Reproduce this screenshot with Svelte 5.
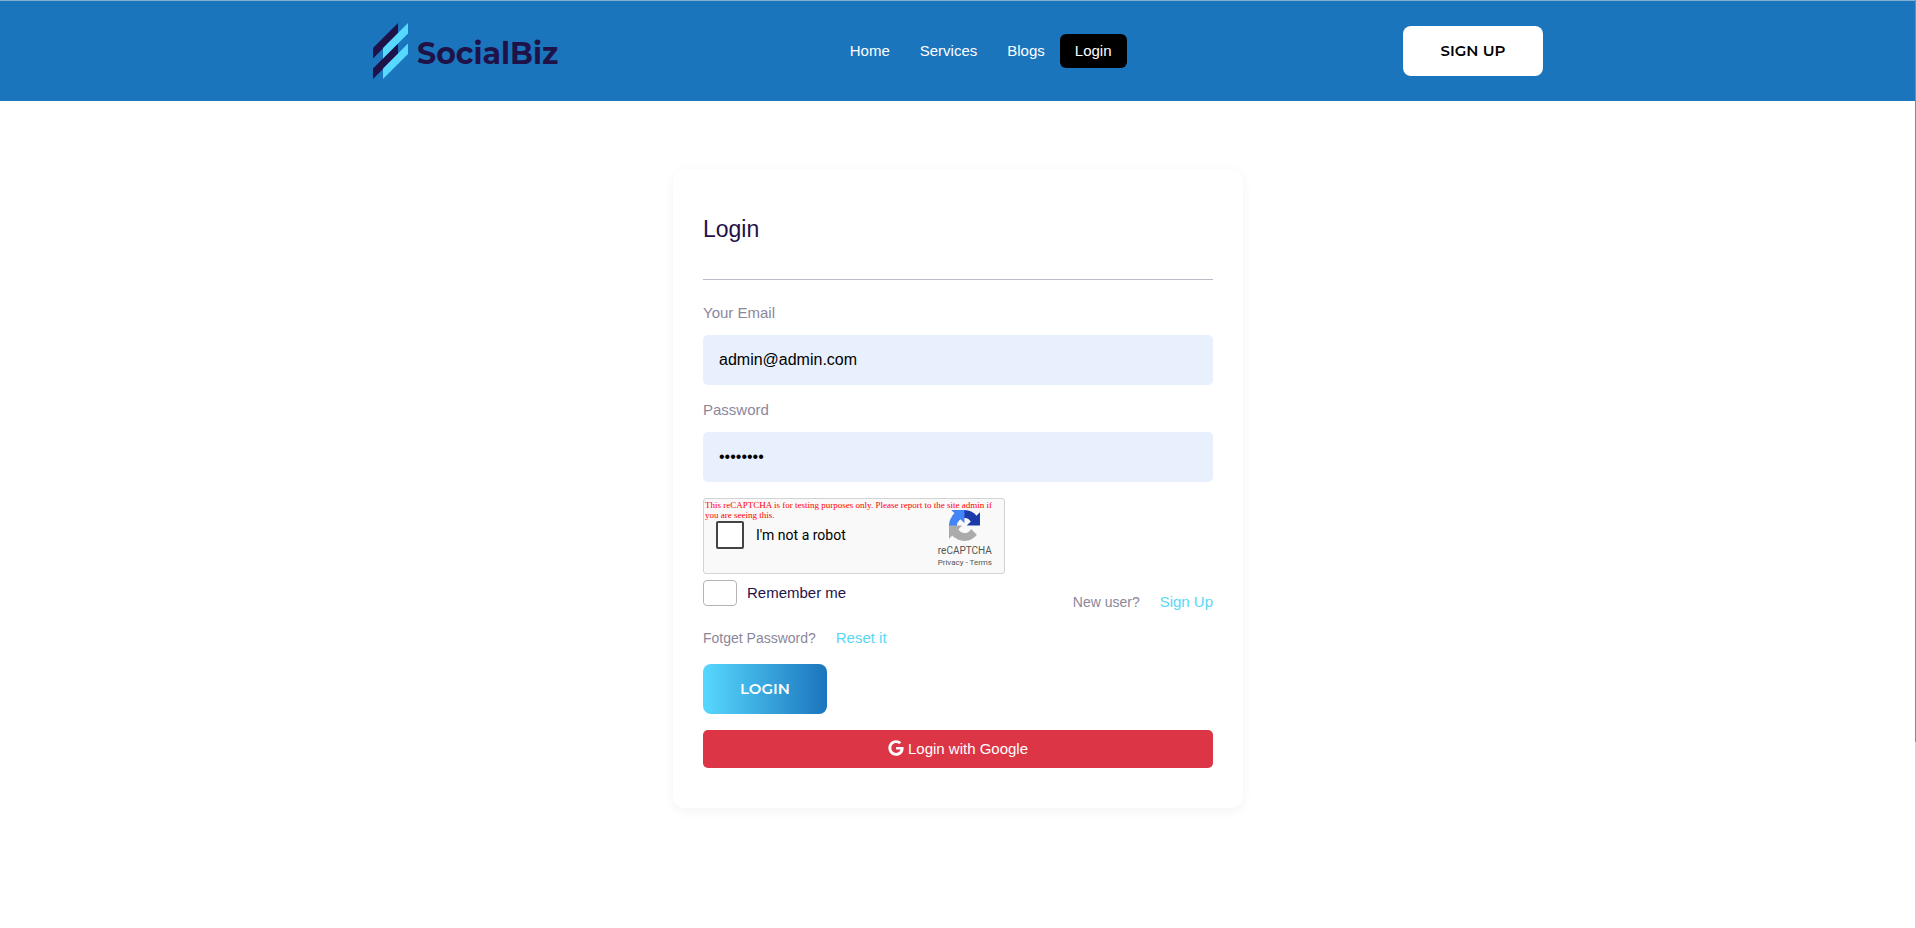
<script lang="ts">
	interface NavItem {
		label: string;
		href: string;
	}

	const navItems: NavItem[] = [
		{ label: 'Home', href: '#home' },
		{ label: 'Services', href: '#services' },
		{ label: 'Blogs', href: '#blogs' },
		{ label: 'Login', href: '#login' },
	];

	let current = $state('Login');
	let email = $state('admin@admin.com');
	let password = $state('password');
	let notRobot = $state(false);
	let remember = $state(false);

	function handleSubmit(e: SubmitEvent) {
		e.preventDefault();
	}
</script>

<div class="page">
	<header class="header">
		<div class="container">
			<a class="logo" href="#home">
				<svg class="logo-mark" viewBox="0 0 36 56" aria-hidden="true">
					<path fill="#1f1249" d="M0 25 25 0v10.500L0 35.500z" />
					<path fill="#1f1249" d="M0 45.500 25 20.500v10.500L0 56z" />
					<path fill="#57d8ff" d="M10 25 35 0v10.500L10 35.500z" />
					<path fill="#57d8ff" d="M10 45.500 35 20.500v10.500L10 56z" />
				</svg>
				<span class="logo-text">SocialBiz</span>
			</a>
			<nav class="nav">
				{#each navItems as item}
					<a
						class="nav-link"
						class:active={current === item.label}
						href={item.href}
						onclick={() => (current = item.label)}>{item.label}</a
					>
				{/each}
			</nav>
			<button class="btn signup" type="button">SIGN UP</button>
		</div>
	</header>

	<main class="main">
		<form class="card" onsubmit={handleSubmit}>
			<h1 class="title">Login</h1>

			<label class="label" for="email">Your Email</label>
			<input class="field" id="email" type="email" bind:value={email} />

			<label class="label" for="password">Password</label>
			<input class="field" id="password" type="password" bind:value={password} />

			<div class="captcha">
				<p class="captcha-warning">
					This reCAPTCHA is for testing purposes only. Please report to the site admin if you are seeing this.
				</p>
				<label class="captcha-check">
					<input type="checkbox" bind:checked={notRobot} />
					<span>I'm not a robot</span>
				</label>
				<div class="captcha-brand">
					<svg viewBox="0 0 64 64" aria-hidden="true">
						<path fill="#1c3aa9" d="M64 31.955l-.033-1.37V4.687l-7.16 7.16C50.948 4.674 42.033.093 32.05.093c-10.4 0-19.622 4.96-25.458 12.64l11.736 11.86a15.55 15.55 0 0 1 4.754-5.334c2.05-1.6 4.952-2.906 8.968-2.906.485 0 .86.057 1.135.163 4.976.393 9.288 3.14 11.828 7.124l-8.307 8.307L64 31.955" />
						<path fill="#4285f4" d="M31.862.094l-1.37.033H4.594l7.16 7.16C4.58 13.147 0 22.06 0 32.046c0 10.4 4.96 19.622 12.64 25.458L24.5 45.768a15.55 15.55 0 0 1-5.334-4.754c-1.6-2.05-2.906-4.952-2.906-8.968 0-.485.057-.86.163-1.135.393-4.976 3.14-9.288 7.124-11.828l8.307 8.307L31.86.095" />
						<path fill="#ababab" d="M.001 32.045l.033 1.37v25.898l7.16-7.16c5.86 7.173 14.774 11.754 24.76 11.754 10.4 0 19.622-4.96 25.458-12.64l-11.736-11.86a15.55 15.55 0 0 1-4.754 5.334c-2.05 1.6-4.952 2.906-8.968 2.906-.485 0-.86-.057-1.135-.163-4.976-.393-9.288-3.14-11.828-7.124l8.307-8.307c-10.522.04-22.4.066-27.295-.005" />
					</svg>
					<span class="captcha-name">reCAPTCHA</span>
					<span class="captcha-links"><a href="#privacy">Privacy</a> - <a href="#terms">Terms</a></span>
				</div>
			</div>

			<div class="options">
				<label class="remember">
					<input type="checkbox" bind:checked={remember} />
					<span>Remember me</span>
				</label>
				<p class="hint new-user">New user? <a href="#signup">Sign Up</a></p>
			</div>
			<p class="hint">Fotget Password? <a href="#reset">Reset it</a></p>

			<button class="btn submit" type="submit">LOGIN</button>
			<button class="google" type="button">
				<svg viewBox="0 0 488 512" aria-hidden="true">
					<path fill="currentColor" d="M488 261.8C488 403.3 391.1 504 248 504 110.8 504 0 393.2 0 256S110.8 8 248 8c66.8 0 123 24.5 166.3 64.9l-67.5 64.9C258.5 52.6 94.3 116.6 94.3 256c0 86.5 69.1 156.6 153.7 156.6 98.2 0 135-70.4 140.8-106.9H248v-85.3h236.1c2.3 12.7 3.9 24.9 3.9 41.4z" />
				</svg>
				<span>Login with Google</span>
			</button>
		</form>
	</main>
	<div class="edge"></div>
</div>

<style>
	.page {
		min-height: 100vh;
		background: #fff;
		font-family: 'Liberation Sans', Arial, sans-serif;
		font-size: 15px;
		line-height: 24px;
		color: #1f1249;
	}

	a {
		text-decoration: none;
	}

	.header {
		padding: 22px 15px;
		border-top: 1px solid #82b0d3;
		background: #1b75bc;
	}

	.container {
		display: flex;
		align-items: center;
		justify-content: space-between;
		max-width: 1170px;
		margin: 0 auto;
	}

	.logo {
		display: flex;
		align-items: center;
		gap: 8px;
		color: #1f1249;
	}

	.logo-mark {
		width: 36px;
		height: 56px;
	}

	.logo-text {
		padding-top: 6px;
		font-family: Montserrat, Inter, sans-serif;
		font-size: 30px;
		font-weight: 700;
	}

	.nav {
		display: flex;
	}

	.nav-link {
		padding: 5px 15px;
		border-radius: 6px;
		color: #fff;
	}

	.active {
		background: #000;
	}

	.btn {
		height: 50px;
		padding: 0 0 2px;
		border: 0;
		border-radius: 8px;
		font-family: Montserrat, Inter, sans-serif;
		font-size: 15px;
		font-weight: 600;
		cursor: pointer;
	}

	.signup {
		width: 140px;
		background: #fff;
		color: #000;
	}

	.main {
		padding: 68px 15px;
	}

	.card {
		box-sizing: border-box;
		max-width: 570px;
		margin: 0 auto;
		padding: 30px 30px 40px;
		border-radius: 12px;
		background: #fff;
		box-shadow: 0 3px 12px rgba(0, 0, 0, 0.05);
	}

	.title {
		margin: 0 0 21px;
		padding: 14px 0 34px;
		border-bottom: 1px solid #bcbac4;
		font-size: 23px;
		font-weight: 400;
		line-height: 32px;
	}

	.label {
		display: block;
		margin-bottom: 10px;
		color: #8b879b;
	}

	.field {
		box-sizing: border-box;
		display: block;
		width: 100%;
		height: 50px;
		margin-bottom: 13px;
		padding: 0 16px;
		border: 0;
		border-radius: 5px;
		outline: 0;
		background: #e8f0fe;
		color: #000;
		font-family: inherit;
		font-size: 16px;
	}

	.captcha {
		position: relative;
		box-sizing: border-box;
		display: flex;
		align-items: center;
		justify-content: space-between;
		width: 302px;
		height: 76px;
		margin-top: 16px;
		padding: 0 12px 2px;
		border: 1px solid #d3d3d3;
		border-radius: 3px;
		background: #f9f9f9;
		color: #000;
		font-family: Roboto, sans-serif;
	}

	/* the test-key notice lies over the widget */
	.captcha-warning {
		position: absolute;
		top: 1px;
		left: 1px;
		right: 2px;
		margin: 0;
		color: #f00;
		font-family: 'Liberation Serif', serif;
		font-size: 9px;
		line-height: 10px;
	}

	.captcha-check {
		display: flex;
		align-items: center;
		gap: 12px;
		font-size: 14px;
	}

	.captcha-check input {
		appearance: none;
		box-sizing: border-box;
		width: 28px;
		height: 28px;
		margin: 0;
		border: 2px solid #444;
		border-radius: 2px;
		background: #fff;
	}

	.captcha-brand {
		display: flex;
		flex-direction: column;
		align-items: center;
		padding-top: 8px;
		color: #555;
		font-size: 10px;
		line-height: 12px;
	}

	.captcha-brand svg {
		width: 31px;
		height: 31px;
		margin-bottom: 4px;
	}

	.captcha-links {
		font-size: 8px;
	}

	.captcha-links a {
		color: #555;
	}

	.options {
		display: flex;
		justify-content: space-between;
		margin-top: 6px;
	}

	.remember {
		display: flex;
		align-items: center;
		gap: 10px;
		height: 26px;
	}

	.remember input {
		appearance: none;
		box-sizing: border-box;
		width: 34px;
		height: 26px;
		margin: 0;
		border: 1px solid #b5b5b5;
		border-radius: 4px;
		background: #fff;
	}

	.remember input:checked,
	.captcha-check input:checked {
		background: #57d8ff;
	}

	.hint {
		margin: 0 0 14px;
		color: #8b879b;
		font-size: 14px;
	}

	.hint a {
		margin-left: 16px;
		color: #57d8f4;
		font-size: 15px;
	}

	.new-user {
		margin: 10px 0 12px;
	}

	.submit {
		display: block;
		width: 124px;
		margin-bottom: 16px;
		background: linear-gradient(90deg, #57d8ff, #1b75bc);
		color: #fff;
	}

	.google {
		display: flex;
		align-items: center;
		justify-content: center;
		gap: 4px;
		width: 100%;
		height: 38px;
		padding: 0 0 2px;
		border: 0;
		border-radius: 5px;
		background: #dc3545;
		color: #fff;
		font-family: inherit;
		font-size: 15px;
		cursor: pointer;
	}

	.google svg {
		width: 16px;
		height: 16px;
	}

	/* thin scroll indicator along the window's right side */
	.edge {
		position: fixed;
		top: 0;
		right: 0;
		width: 1px;
		height: 100%;
		background: linear-gradient(#888 80%, #d5d5d5 80%);
	}

	:global(body) {
		margin: 0;
	}
</style>
